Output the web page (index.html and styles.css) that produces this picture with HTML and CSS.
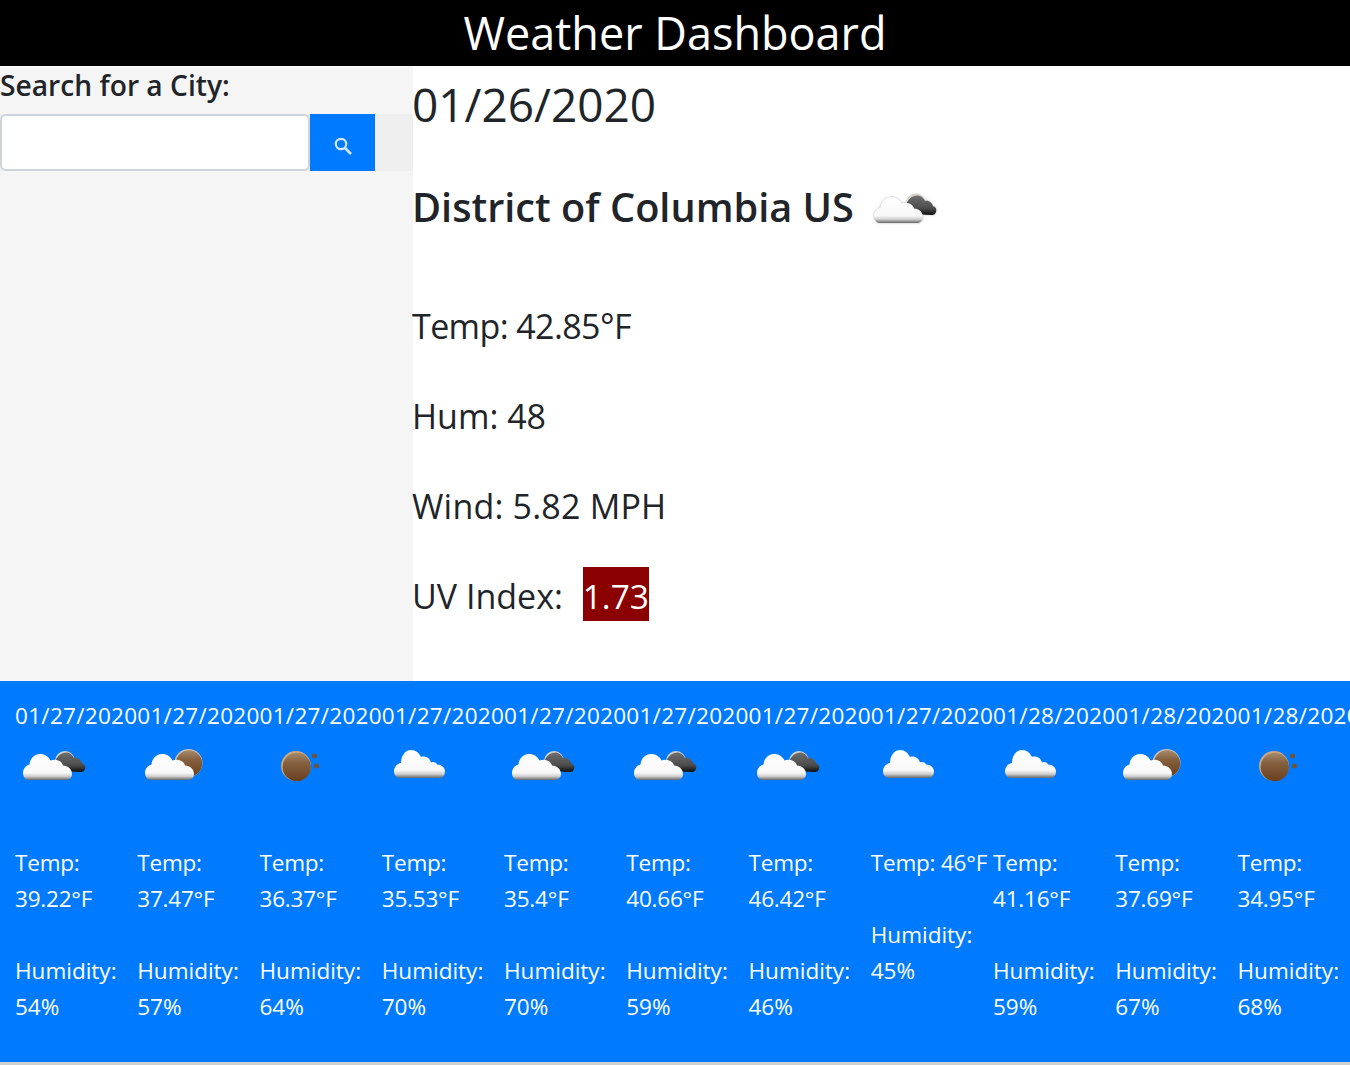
FILE: index.html
```html
<!DOCTYPE html>
<html lang="en">
<head>
    <meta charset="UTF-8">
    <meta name="viewport" content="width=device-width, initial-scale=1.0">
    <title>Weather Dashboard</title>
    <link rel="stylesheet" href="styles.css">
</head>
<body>

<svg class="sprite" xmlns="http://www.w3.org/2000/svg">
    <defs>
        <linearGradient id="cloudFill" x1="0" y1="0" x2="0" y2="1">
            <stop offset="0" stop-color="#ffffff"/>
            <stop offset="0.72" stop-color="#f8f8f8"/>
            <stop offset="0.86" stop-color="#cfcfcf"/>
            <stop offset="1" stop-color="#666666"/>
        </linearGradient>
        <linearGradient id="darkFill" x1="0" y1="0" x2="0" y2="1">
            <stop offset="0" stop-color="#6f6f6f"/>
            <stop offset="0.65" stop-color="#4c4c4c"/>
            <stop offset="1" stop-color="#0e0e0e"/>
        </linearGradient>
        <linearGradient id="sunFill" x1="0" y1="0" x2="0" y2="1">
            <stop offset="0" stop-color="#a58a6c"/>
            <stop offset="0.35" stop-color="#86613f"/>
            <stop offset="1" stop-color="#693f1e"/>
        </linearGradient>
        <filter id="soft" x="-10%" y="-10%" width="120%" height="120%">
            <feGaussianBlur stdDeviation="0.45"/>
        </filter>
        <path id="frontCloud" d="M14 46C10 46 8 42.500 8 39C8 35 10.500 31.500 14.500 30.500C15 24.500 19.500 20 25 20C30 20 33.500 22.500 35.500 26.500C41 24.500 47 27 48 31.500C53 31.500 57 35.500 57 40C57 43.500 54.500 46 51 46Z"/>
    </defs>
    <symbol id="iconNight" viewBox="0 0 80 80">
        <g filter="url(#soft)">
            <circle cx="50" cy="27" r="10" fill="#d9d2c8"/>
            <path d="M44 37C41 37 39 35 39.500 31C40 25 44 19 51 18.500C54 18.500 57 20 59 24C63 23 66 26 67 29C69.500 30 71 32 70 35C69.500 37 68 38 66 38Z" fill="url(#darkFill)"/>
            <use href="#frontCloud" fill="url(#cloudFill)"/>
        </g>
    </symbol>
    <symbol id="iconSunCloud" viewBox="0 0 80 80">
        <g filter="url(#soft)">
            <circle cx="51.500" cy="29" r="14" fill="#c9bdad"/>
            <circle cx="52" cy="29.500" r="13.200" fill="url(#sunFill)"/>
            <use href="#frontCloud" fill="url(#cloudFill)"/>
        </g>
    </symbol>
    <symbol id="iconSun" viewBox="0 0 80 80">
        <g filter="url(#soft)">
            <circle cx="36" cy="32" r="15" fill="#d0a67c"/>
            <circle cx="36.800" cy="33" r="14.200" fill="url(#sunFill)"/>
            <circle cx="54.500" cy="22" r="2.500" fill="#6f5237"/>
            <circle cx="56.500" cy="32" r="2.500" fill="#6f5237"/>
        </g>
    </symbol>
    <symbol id="iconCloud" viewBox="0 0 80 80">
        <g filter="url(#soft)">
            <path d="M18 44C14.500 44 12 41 12 37.500C12 33 15 29.500 19 29C19 22 23 16 29 16C34 16 37 19 39 23C43 21.500 48 24 49 28.500C51 27.500 54 28 55 30.500C60 30.500 63 34 63 37.500C63 41 61 44 58 44Z" fill="url(#cloudFill)"/>
        </g>
    </symbol>
</svg>

<header class="top-bar">Weather Dashboard</header>

<div class="layout">
    <aside class="sidebar">
        <label class="search-label" for="city">Search for a City:</label>
        <div class="search-row">
            <input class="search-input" id="city" type="text">
            <button class="search-btn" type="button" aria-label="Search">
                <svg class="search-icon" viewBox="0 0 20 20">
                    <circle cx="8" cy="8" r="5.200" fill="none" stroke="currentColor" stroke-width="2.200"/>
                    <path d="M12 12l6 6" stroke="currentColor" stroke-width="2.600"/>
                </svg>
            </button>
        </div>
    </aside>

    <main class="current">
        <div class="current-date">01/26/2020</div>
        <h2 class="current-city">
            <span>District of Columbia US</span>
            <svg class="current-icon"><use href="#iconNight"/></svg>
        </h2>
        <p class="current-line temp-line">Temp: 42.85°F</p>
        <p class="current-line">Hum: 48</p>
        <p class="current-line wind-line">Wind: 5.82 MPH</p>
        <p class="current-line uv-line">UV Index: <span class="uv-badge">1.73</span></p>
    </main>
</div>

<section class="forecast">
    <div class="card">
        <div class="card-date">01/27/2020</div>
        <svg class="card-icon"><use href="#iconNight"/></svg>
        <p>Temp: 39.22°F</p>
        <p>Humidity: 54%</p>
    </div>
    <div class="card">
        <div class="card-date">01/27/2020</div>
        <svg class="card-icon"><use href="#iconSunCloud"/></svg>
        <p>Temp: 37.47°F</p>
        <p>Humidity: 57%</p>
    </div>
    <div class="card">
        <div class="card-date">01/27/2020</div>
        <svg class="card-icon"><use href="#iconSun"/></svg>
        <p>Temp: 36.37°F</p>
        <p>Humidity: 64%</p>
    </div>
    <div class="card">
        <div class="card-date">01/27/2020</div>
        <svg class="card-icon"><use href="#iconCloud"/></svg>
        <p>Temp: 35.53°F</p>
        <p>Humidity: 70%</p>
    </div>
    <div class="card">
        <div class="card-date">01/27/2020</div>
        <svg class="card-icon"><use href="#iconNight"/></svg>
        <p>Temp: 35.4°F</p>
        <p>Humidity: 70%</p>
    </div>
    <div class="card">
        <div class="card-date">01/27/2020</div>
        <svg class="card-icon"><use href="#iconNight"/></svg>
        <p>Temp: 40.66°F</p>
        <p>Humidity: 59%</p>
    </div>
    <div class="card">
        <div class="card-date">01/27/2020</div>
        <svg class="card-icon"><use href="#iconNight"/></svg>
        <p>Temp: 46.42°F</p>
        <p>Humidity: 46%</p>
    </div>
    <div class="card">
        <div class="card-date">01/27/2020</div>
        <svg class="card-icon"><use href="#iconCloud"/></svg>
        <p>Temp: 46°F</p>
        <p>Humidity: 45%</p>
    </div>
    <div class="card">
        <div class="card-date">01/28/2020</div>
        <svg class="card-icon"><use href="#iconCloud"/></svg>
        <p>Temp: 41.16°F</p>
        <p>Humidity: 59%</p>
    </div>
    <div class="card">
        <div class="card-date">01/28/2020</div>
        <svg class="card-icon"><use href="#iconSunCloud"/></svg>
        <p>Temp: 37.69°F</p>
        <p>Humidity: 67%</p>
    </div>
    <div class="card">
        <div class="card-date">01/28/2020</div>
        <svg class="card-icon"><use href="#iconSun"/></svg>
        <p>Temp: 34.95°F</p>
        <p>Humidity: 68%</p>
    </div>
</section>

</body>
</html>
```

FILE: styles.css
```css
body {
    font-family: "Open Sans", sans-serif;
    color: #212529;
    background-color: #cfcfcf;
    margin: 0;
    overflow: hidden;
}
.sprite {
    display: block;
    width: 0;
    height: 0;
}
.top-bar {
    height: 66px;
    line-height: 66px;
    background: #000;
    color: #fff;
    text-align: center;
    font-size: 45px;
}
.layout {
    display: flex;
    height: 615px;
    background: #fff;
}
.sidebar {
    flex: 0 0 412px;
    background: #f5f5f5;
}
.search-label {
    display: block;
    height: 48px;
    line-height: 38px;
    font-size: 28.200px;
    font-weight: 600;
}
.search-row {
    display: flex;
    width: 413px;
    height: 57px;
    background: #efefef;
    position: relative;
}
.search-input {
    box-sizing: border-box;
    width: 310px;
    height: 57px;
    margin: 0;
    border: 2px solid #ced4da;
    border-radius: 6px;
    background: #fff;
}
.search-btn {
    display: flex;
    align-items: center;
    justify-content: center;
    width: 65px;
    height: 57px;
    padding: 6px 0 0;
    border: 0;
    background: #007bff;
    color: #d6e8ff;
}
.search-icon {
    width: 20px;
    height: 20px;
}
.current {
    flex: 1;
    margin-left: -1px;
    padding: 2px 0 0;
}
.current-date {
    height: 72px;
    line-height: 72px;
    font-size: 46px;
    margin-bottom: 37px;
}
.current-city {
    display: flex;
    align-items: flex-start;
    height: 60px;
    line-height: 60px;
    margin: 0 0 62px;
    font-size: 39.700px;
    font-weight: 600;
}
.current-icon {
    width: 80px;
    height: 80px;
    margin: 0 0 0 12px;
    filter: drop-shadow(0 0 1px rgba(0, 0, 0, 0.3));
}
.current-line {
    height: 54px;
    line-height: 54px;
    margin: 0 0 36px;
    font-size: 34px;
}
.temp-line {
    letter-spacing: -0.6px;
}
.wind-line {
    letter-spacing: 0.2px;
}
.uv-line {
    margin-top: -2px;
}
.uv-badge {
    display: inline-block;
    margin-left: 11px;
    padding-top: 4px;
    line-height: 50px;
    font-size: 33.500px;
    background: #8b0000;
    color: #fff;
}
.forecast {
    display: flex;
    height: 381px;
    box-sizing: border-box;
    padding: 17px 0 0 15px;
    overflow: hidden;
    background: #007bff;
    color: #fff;
    font-size: 22.500px;
    line-height: 36px;
}
.card {
    flex: 0 0 122.250px;
    min-width: 0;
}
.card-date {
    white-space: nowrap;
    letter-spacing: 0.3px;
}
.card-icon {
    display: block;
    width: 80px;
    height: 80px;
    margin-bottom: 31px;
}
.card p {
    margin: 0 0 36px;
}
.card p:first-of-type {
    letter-spacing: -0.2px;
}
```
